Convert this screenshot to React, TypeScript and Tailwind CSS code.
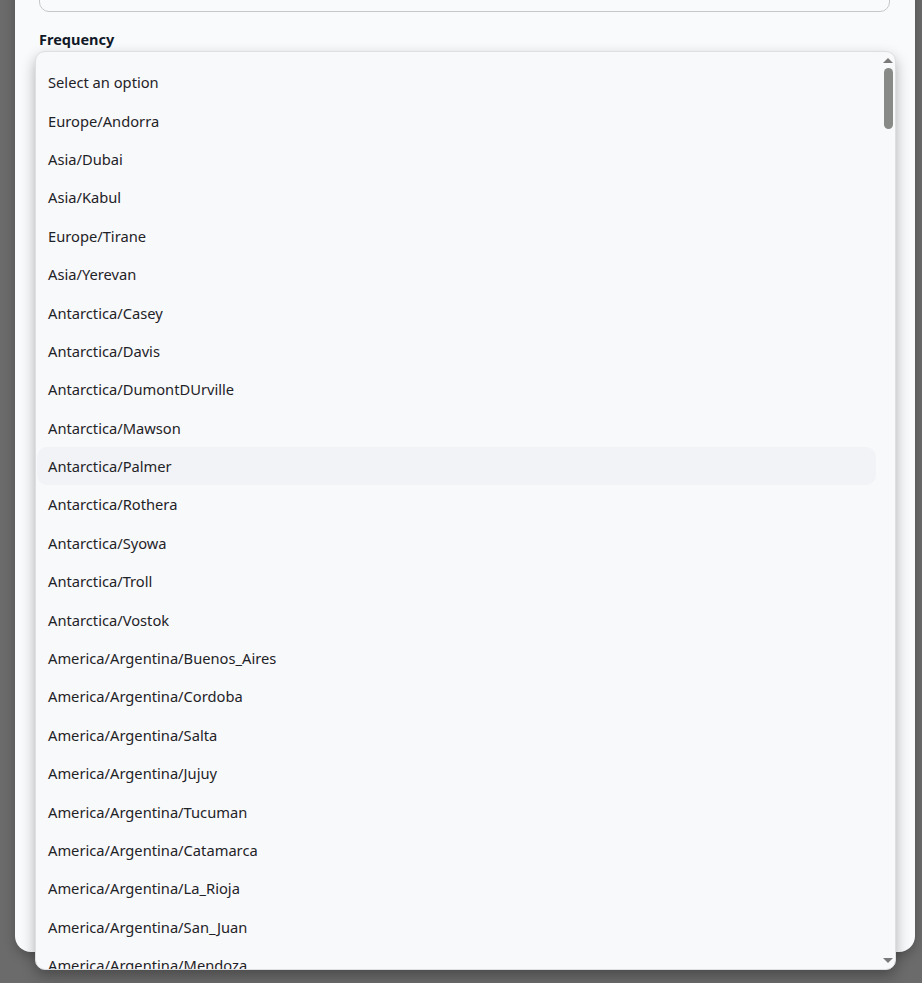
const zones = [
  'Select an option',
  'Europe/Andorra',
  'Asia/Dubai',
  'Asia/Kabul',
  'Europe/Tirane',
  'Asia/Yerevan',
  'Antarctica/Casey',
  'Antarctica/Davis',
  'Antarctica/DumontDUrville',
  'Antarctica/Mawson',
  'Antarctica/Palmer',
  'Antarctica/Rothera',
  'Antarctica/Syowa',
  'Antarctica/Troll',
  'Antarctica/Vostok',
  'America/Argentina/Buenos_Aires',
  'America/Argentina/Cordoba',
  'America/Argentina/Salta',
  'America/Argentina/Jujuy',
  'America/Argentina/Tucuman',
  'America/Argentina/Catamarca',
  'America/Argentina/La_Rioja',
  'America/Argentina/San_Juan',
  'America/Argentina/Mendoza',
];

function Scrollbar() {
  return (
    <div className="ml-[5px] flex w-[14px] shrink-0 flex-col items-center pt-[6px] pb-[6px]">
      <div className="h-0 w-0 border-x-[5px] border-b-[5px] border-x-transparent border-b-[#7a7a7a]" />
      <div className="mt-[5px] h-[61px] w-[9px] rounded-full bg-[#878a86]" />
      <div className="flex-1" />
      <div className="h-0 w-0 border-x-[5px] border-t-[5px] border-x-transparent border-t-[#7a7a7a]" />
    </div>
  );
}

export default function App() {
  const hovered = 'Antarctica/Palmer';

  return (
    <div
      className="relative h-[983px] w-full overflow-hidden bg-[#6b6b6b] pl-[15px] pr-[7px]"
      style={{ fontFamily: '"Noto Sans", "Open Sans", sans-serif' }}
    >
      {/* modal card */}
      <div className="-mt-[40px] h-[992px] rounded-b-[16px] bg-[#f9fafb] pl-[24px] pr-[25px] pt-[12px] shadow-[0_4px_12px_rgba(0,0,0,0.25)]">
        <div className="h-[40px] w-full rounded-[10px] border border-[#c6c7c9] bg-[#f9fafb]" />
        <label className="mt-[17px] block text-[14.5px] font-bold leading-[20px] text-[#111827]">
          Frequency
        </label>
      </div>

      {/* open listbox */}
      <div className="absolute left-[35px] top-[51px] flex h-[919px] w-[861px] overflow-hidden rounded-[10px] border border-[#dedfe1] bg-[#f8f9fa] shadow-[0_6px_14px_rgba(0,0,0,0.3)]">
        <ul className="flex-1 overflow-hidden pl-[1px] pt-[11px]">
          {zones.map((z) => (
            <li
              key={z}
              className={
                'flex h-[38.4px] items-center rounded-[10px] pl-[11px] text-[14.7px] text-[#1f2328] ' +
                (z === hovered ? 'bg-[#f1f3f6]' : '')
              }
            >
              {z}
            </li>
          ))}
        </ul>
        <Scrollbar />
      </div>
    </div>
  );
}
